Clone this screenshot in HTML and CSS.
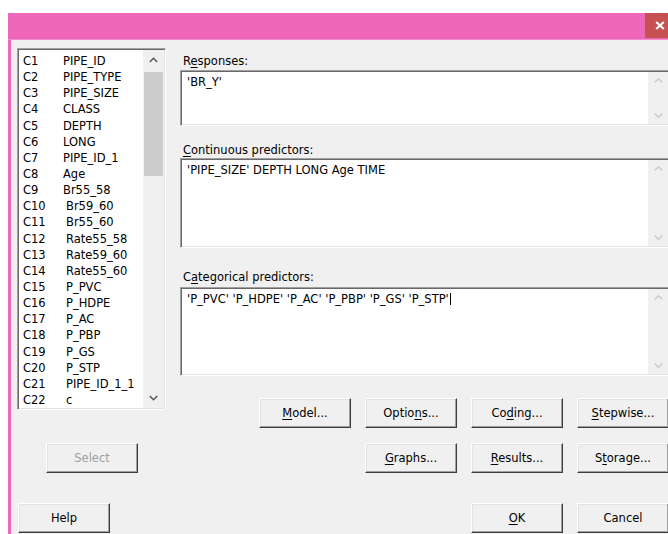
FILE: index.html
```html
<!DOCTYPE html>
<html lang="en">
<head>
<meta charset="utf-8">
<title>Binary Logistic Regression</title>
<link rel="stylesheet" href="styles.css">
</head>
<body>
<div class="window">
  <div class="titlebar">
    <span class="caption-btn" title="Close">
      <svg width="10" height="9" viewBox="0 0 10 9"><path d="M1.2 1 L8.8 8 M8.8 1 L1.2 8" stroke="#fff" stroke-width="2.2" fill="none"/></svg>
    </span>
  </div>

  <div class="client">
    <div class="left-col">
      <div class="listbox sunken">
        <ul class="collist">
          <li><span class="cid">C1</span><span class="cname">PIPE_ID</span></li>
          <li><span class="cid">C2</span><span class="cname">PIPE_TYPE</span></li>
          <li><span class="cid">C3</span><span class="cname">PIPE_SIZE</span></li>
          <li><span class="cid">C4</span><span class="cname">CLASS</span></li>
          <li><span class="cid">C5</span><span class="cname">DEPTH</span></li>
          <li><span class="cid">C6</span><span class="cname">LONG</span></li>
          <li><span class="cid">C7</span><span class="cname">PIPE_ID_1</span></li>
          <li><span class="cid">C8</span><span class="cname">Age</span></li>
          <li><span class="cid">C9</span><span class="cname">Br55_58</span></li>
          <li><span class="cid">C10</span><span class="cname wide">Br59_60</span></li>
          <li><span class="cid">C11</span><span class="cname wide">Br55_60</span></li>
          <li><span class="cid">C12</span><span class="cname wide">Rate55_58</span></li>
          <li><span class="cid">C13</span><span class="cname wide">Rate59_60</span></li>
          <li><span class="cid">C14</span><span class="cname wide">Rate55_60</span></li>
          <li><span class="cid">C15</span><span class="cname wide">P_PVC</span></li>
          <li><span class="cid">C16</span><span class="cname wide">P_HDPE</span></li>
          <li><span class="cid">C17</span><span class="cname wide">P_AC</span></li>
          <li><span class="cid">C18</span><span class="cname wide">P_PBP</span></li>
          <li><span class="cid">C19</span><span class="cname wide">P_GS</span></li>
          <li><span class="cid">C20</span><span class="cname wide">P_STP</span></li>
          <li><span class="cid">C21</span><span class="cname wide">PIPE_ID_1_1</span></li>
          <li><span class="cid">C22</span><span class="cname wide">c</span></li>
        </ul>
        <div class="vscroll list-scroll">
          <div class="arrow"><svg width="9" height="6" viewBox="0 0 9 6"><polyline points="0.8,5 4.5,1.3 8.2,5" fill="none" stroke="#555" stroke-width="1.5"/></svg></div>
          <div class="track"><div class="thumb"></div></div>
          <div class="arrow"><svg width="9" height="6" viewBox="0 0 9 6"><polyline points="0.8,1 4.5,4.7 8.2,1" fill="none" stroke="#555" stroke-width="1.5"/></svg></div>
        </div>
      </div>
      <button class="btn select" disabled>Select</button>
      <button class="btn help">Help</button>
    </div>

    <div class="right-col">
      <label class="label lbl-resp">R<u>e</u>sponses:</label>
      <div class="field sunken field-resp">
        <div class="field-text">'BR_Y'</div>
        <div class="vscroll field-scroll">
          <div class="arrow"><svg width="9" height="5" viewBox="0 0 9 5"><polyline points="0.6,4.4 4.5,0.7 8.4,4.4" fill="none" stroke="#c6c6c6" stroke-width="1.3"/></svg></div>
          <div class="track"></div>
          <div class="arrow"><svg width="9" height="5" viewBox="0 0 9 5"><polyline points="0.6,0.6 4.5,4.3 8.4,0.6" fill="none" stroke="#c6c6c6" stroke-width="1.3"/></svg></div>
        </div>
      </div>

      <label class="label lbl-cont"><u>C</u>ontinuous predictors:</label>
      <div class="field sunken field-cont">
        <div class="field-text">'PIPE_SIZE' DEPTH LONG Age TIME</div>
        <div class="vscroll field-scroll">
          <div class="arrow"><svg width="9" height="5" viewBox="0 0 9 5"><polyline points="0.6,4.4 4.5,0.7 8.4,4.4" fill="none" stroke="#c6c6c6" stroke-width="1.3"/></svg></div>
          <div class="track"></div>
          <div class="arrow"><svg width="9" height="5" viewBox="0 0 9 5"><polyline points="0.6,0.6 4.5,4.3 8.4,0.6" fill="none" stroke="#c6c6c6" stroke-width="1.3"/></svg></div>
        </div>
      </div>

      <label class="label lbl-cat">C<u>a</u>tegorical predictors:</label>
      <div class="field sunken field-cat">
        <div class="field-text">'P_PVC' 'P_HDPE' 'P_AC' 'P_PBP' 'P_GS' 'P_STP'<span class="caret"></span></div>
        <div class="vscroll field-scroll">
          <div class="arrow"><svg width="9" height="5" viewBox="0 0 9 5"><polyline points="0.6,4.4 4.5,0.7 8.4,4.4" fill="none" stroke="#c6c6c6" stroke-width="1.3"/></svg></div>
          <div class="track"></div>
          <div class="arrow"><svg width="9" height="5" viewBox="0 0 9 5"><polyline points="0.6,0.6 4.5,4.3 8.4,0.6" fill="none" stroke="#c6c6c6" stroke-width="1.3"/></svg></div>
        </div>
      </div>

      <div class="btn-grid">
        <button class="btn c1 r1"><u>M</u>odel...</button>
        <button class="btn c2 r1">Optio<u>n</u>s...</button>
        <button class="btn c3 r1">Co<u>d</u>ing...</button>
        <button class="btn c4 r1"><u>S</u>tepwise...</button>
        <button class="btn c2 r2"><u>G</u>raphs...</button>
        <button class="btn c3 r2"><u>R</u>esults...</button>
        <button class="btn c4 r2">S<u>t</u>orage...</button>
        <button class="btn c3 r3"><u>O</u>K</button>
        <button class="btn c4 r3">Cancel</button>
      </div>
    </div>
  </div>
</div>
</body>
</html>
```

FILE: styles.css
```css
html, body {
  margin: 0;
  height: 100%;
  overflow: hidden;
  background: #fff;
}

body {
  font-family: "DejaVu Sans", "Liberation Sans", sans-serif;
  font-size: 11.5px;
  color: #000;
}

/* dialog frame: the pink frame colour shows through as title bar and left edge */
.window {
  margin: 13px 0 0 8px;
  width: 660px;
  height: 521px;
  background: #ef67b8;
  display: flex;
  flex-direction: column;
}

.titlebar {
  height: 27px;
  flex: none;
  display: flex;
  align-items: flex-start;
  border-bottom: 1px solid #f08cc8;
  box-sizing: border-box;
}

.caption-btn {
  margin-left: auto;
  width: 23px;
  height: 25px;
  background: #c75050;
  display: flex;
  align-items: center;
  padding-left: 10px;
  box-sizing: border-box;
  flex: none;
}

.client {
  flex: 1;
  background: #f0f0f0;
  margin-left: 3px;
  display: flex;
  column-gap: 14px;
  padding: 8px 0 0 6px;
}

/* sunken 3D edge used by list box and text fields */
.sunken {
  box-sizing: border-box;
  border: 1px solid;
  border-color: #a0a0a0 #fff #fff #a0a0a0;
  box-shadow: inset 1px 1px #696969, inset -1px -1px #e3e3e3;
  padding: 1px;
  background: #fff;
}

/* left column: variable list */
.left-col {
  width: 149px;
  display: flex;
  flex-direction: column;
  align-items: flex-start;
  flex: none;
}

.listbox {
  width: 149px;
  height: 362px;
  display: flex;
}

.collist {
  flex: 1;
  list-style: none;
  margin: 0;
  padding: 3px 0 0 4px;
  overflow: hidden;
}

.collist li {
  height: 16.15px;
  line-height: 16px;
  display: flex;
  white-space: nowrap;
}

.cid {
  width: 40px;
  flex: none;
}

.cname.wide {
  padding-left: 3px;
}

.vscroll {
  display: flex;
  flex-direction: column;
  background: #f0f0f0;
  flex: none;
}

.vscroll .arrow {
  display: flex;
  align-items: center;
  justify-content: center;
  flex: none;
}

.vscroll .track {
  flex: 1;
}

.list-scroll {
  width: 21px;
}

.list-scroll .arrow {
  height: 20px;
}

.list-scroll .track {
  padding: 2px 1px 0;
}

.thumb {
  height: 104px;
  background: #cdcdcd;
}

.field-scroll {
  width: 20px;
}

.field-scroll .arrow {
  height: 17px;
}

/* push buttons */
.btn {
  width: 92px;
  height: 30px;
  box-sizing: border-box;
  font: inherit;
  color: #000;
  background: #f0f0f0;
  border: 1px solid;
  border-color: #fff #3c3c3c #3c3c3c #fff;
  box-shadow: inset -1px -1px #a0a0a0, inset 1px 1px #e3e3e3;
  padding: 0;
}

.btn u,
.label u {
  text-decoration-thickness: 1px;
  text-underline-offset: 2px;
}

.select {
  margin: 33px 0 0 29px;
  color: #a0a0a0;
}

.help {
  margin: 30px 0 0 1px;
}

/* right column: model fields */
.right-col {
  width: 490px;
  flex: none;
  padding-top: 6px;
}

.label {
  display: block;
  height: 14px;
  line-height: 14px;
  padding-left: 3px;
}

.lbl-resp { margin-bottom: 2px; }
.lbl-cont { margin-bottom: 1px; }
.lbl-cat  { margin-bottom: 3px; }

.field {
  display: flex;
  width: 490px;
}

.field-text {
  flex: 1;
  padding: 3px 4px 3px 5px;
  line-height: 14px;
  white-space: nowrap;
  overflow: hidden;
}

.field-resp { height: 56px; margin-bottom: 17px; }
.field-cont { height: 90px; margin-bottom: 22px; }
.field-cat  { height: 89px; }

.caret {
  display: inline-block;
  width: 1px;
  height: 12px;
  background: #000;
  vertical-align: -2px;
  margin-left: 1px;
}

.btn-grid {
  margin: 22px 0 0 79px;
  display: grid;
  grid-template-columns: repeat(4, 92px);
  grid-template-rows: 30px 30px 45px;
  column-gap: 14px;
  row-gap: 15px;
}

.c1 { grid-column: 1; }
.c2 { grid-column: 2; }
.c3 { grid-column: 3; }
.c4 { grid-column: 4; }
.r1 { grid-row: 1; }
.r2 { grid-row: 2; }
.r3 { grid-row: 3; align-self: end; }
```
